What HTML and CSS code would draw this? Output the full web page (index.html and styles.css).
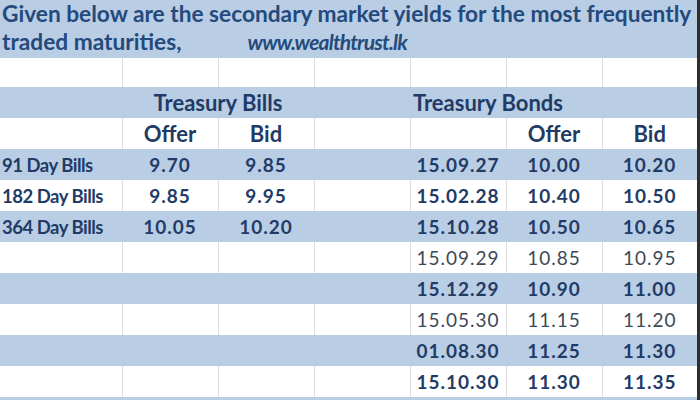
FILE: index.html
```html
<!DOCTYPE html>
<html>
<head>
<meta charset="utf-8">
<link rel="stylesheet" href="styles.css">
</head>
<body>
<div class="sheet">
  <div class="title">
    <div class="line1">Given below are the secondary market yields for the most frequently</div>
    <div class="line2">traded maturities,<span class="url">www.wealthtrust.lk</span></div>
  </div>
  <table class="grid">
    <colgroup>
      <col class="c1"><col class="c"><col class="c"><col class="c"><col class="c"><col class="c"><col class="c7">
    </colgroup>
    <tr class="white blank"><td></td><td></td><td></td><td></td><td></td><td></td><td></td></tr>
    <tr class="blue head"><td></td><td colspan="2" class="center">Treasury Bills</td><td></td><td colspan="3" class="left">Treasury Bonds</td></tr>
    <tr class="white head"><td></td><td>Offer</td><td>Bid</td><td></td><td></td><td>Offer</td><td>Bid</td></tr>
    <tr class="blue"><td class="label">91 Day Bills</td><td>9.70</td><td>9.85</td><td></td><td>15.09.27</td><td>10.00</td><td>10.20</td></tr>
    <tr class="white"><td class="label">182 Day Bills</td><td>9.85</td><td>9.95</td><td></td><td>15.02.28</td><td>10.40</td><td>10.50</td></tr>
    <tr class="blue"><td class="label">364 Day Bills</td><td>10.05</td><td>10.20</td><td></td><td>15.10.28</td><td>10.50</td><td>10.65</td></tr>
    <tr class="white light"><td></td><td></td><td></td><td></td><td>15.09.29</td><td>10.85</td><td>10.95</td></tr>
    <tr class="blue"><td></td><td></td><td></td><td></td><td>15.12.29</td><td>10.90</td><td>11.00</td></tr>
    <tr class="white light"><td></td><td></td><td></td><td></td><td>15.05.30</td><td>11.15</td><td>11.20</td></tr>
    <tr class="blue"><td></td><td></td><td></td><td></td><td>01.08.30</td><td>11.25</td><td>11.30</td></tr>
    <tr class="white"><td></td><td></td><td></td><td></td><td>15.10.30</td><td>11.30</td><td>11.35</td></tr>
    <tr class="blue end"><td></td><td></td><td></td><td></td><td></td><td></td><td></td></tr>
  </table>
</div>
</body>
</html>
```
FILE: styles.css
```css
html, body {
  margin: 0;
  padding: 0;
  background: #ffffff;
}
.sheet {
  width: 697px;
  height: 400px;
  overflow: hidden;
  border-right: 3px solid #2e2e2e;
  font-family: Lato, "Open Sans", sans-serif;
  color: #1f3b66;
}
.title {
  height: 58px;
  background: #b9cde5;
  padding-left: 2px;
  font-size: 22.7px;
  font-weight: bold;
  color: #244a7c;
  white-space: nowrap;
}
.line1 {
  line-height: 27px;
}
.line2 {
  line-height: 29px;
}
.url {
  font-style: italic;
  font-size: 21px;
  letter-spacing: -0.8px;
  margin-left: 66px;
}
.grid {
  border-collapse: collapse;
  table-layout: fixed;
  width: 697px;
}
.c1 { width: 122px; }
.c { width: 96px; }
.c7 { width: 95px; }
.grid td {
  height: 31px;
  padding: 0;
  text-align: center;
  font-size: 19px;
  letter-spacing: 1px;
  font-weight: bold;
  white-space: nowrap;
  overflow: visible;
}
.grid tr.head td {
  font-size: 22px;
  letter-spacing: 0;
}
.grid tr.blank td { height: 29px; }
.grid tr.end td { height: 4px; }
.grid tr.blue td {
  background: #b9cde5;
}
.grid tr.white td {
  background: #ffffff;
  border-left: 1px solid #dedede;
}
.grid tr.white td:first-child {
  border-left: none;
}
.grid td.label {
  text-align: left;
  padding-left: 2px;
  font-size: 18.5px;
  letter-spacing: -0.5px;
}
.grid td.left {
  text-align: left;
  padding-left: 3px;
}
.grid tr.light td {
  font-weight: normal;
  color: #3e4957;
}
```
